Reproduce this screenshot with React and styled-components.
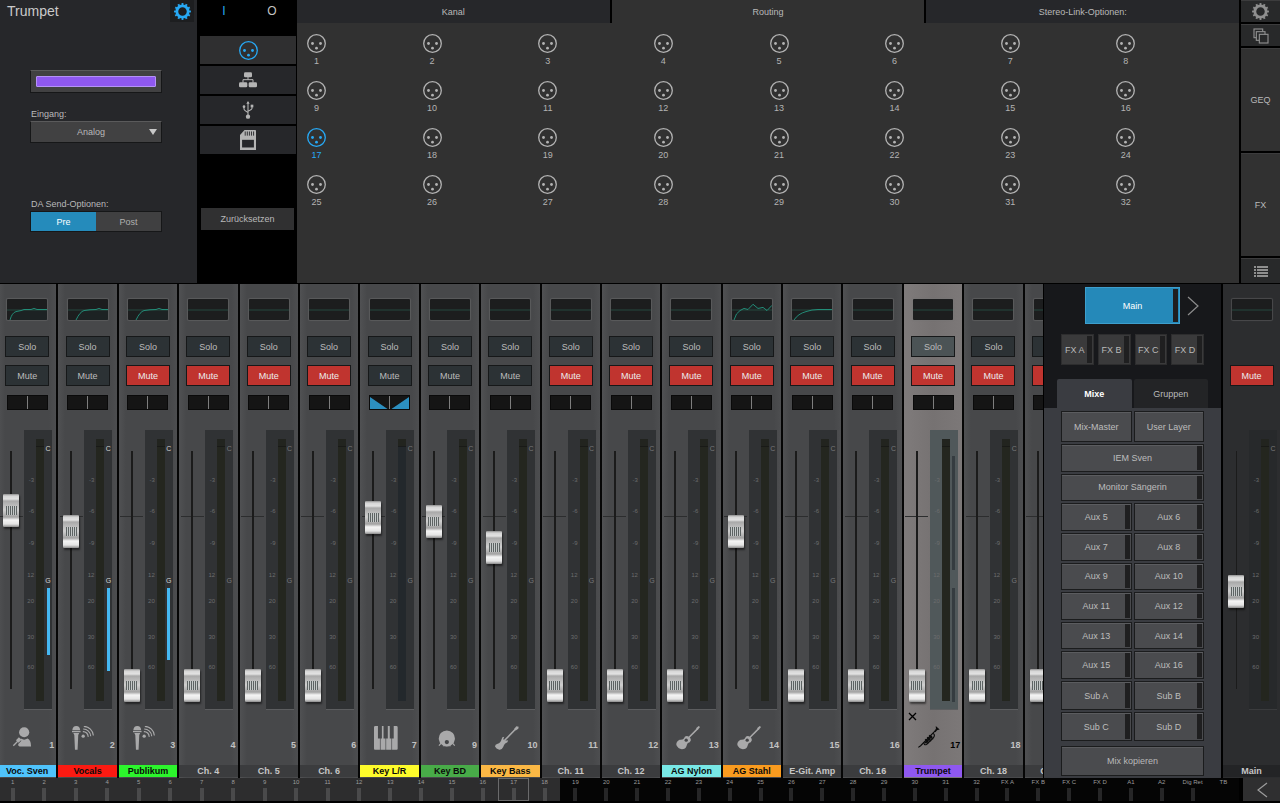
import { useState } from "react";
import styled, { createGlobalStyle, css } from "styled-components";

const channels = [
  { name: "Voc. Sven", no: 1, color: "#4fc3fb", icon: "singer", level: 75, eq: "low", gain: 67 },
  { name: "Vocals", no: 2, color: "#fb1a12", icon: "mic", level: 66, eq: "mid", gain: 83 },
  { name: "Publikum", no: 3, color: "#2cf52c", icon: "mic", mute: true, eq: "mid", gain: 72 },
  { name: "Ch. 4", no: 4, mute: true },
  { name: "Ch. 5", no: 5, mute: true },
  { name: "Ch. 6", no: 6, mute: true },
  { name: "Key L/R", no: 7, color: "#fdfb2b", icon: "keys", level: 72, stereo: true },
  { name: "Key BD", no: 9, color: "#48ab48", icon: "kick", level: 70 },
  { name: "Key Bass", no: 10, color: "#fbb845", icon: "guitar", level: 59 },
  { name: "Ch. 11", no: 11, mute: true },
  { name: "Ch. 12", no: 12, mute: true },
  { name: "AG Nylon", no: 13, color: "#78e8e6", icon: "acoustic", mute: true },
  { name: "AG Stahl", no: 14, color: "#f99b1f", icon: "acoustic", mute: true, level: 66, eq: "bumps" },
  { name: "E-Git. Amp", no: 15, mute: true, eq: "slope" },
  { name: "Ch. 16", no: 16, mute: true },
  { name: "Trumpet", no: 17, color: "#8f58f0", icon: "trumpet", mute: true, selected: true },
  { name: "Ch. 18", no: 18, mute: true },
  { name: "Ch. 19", no: 19, mute: true },
];

const mixes = [
  { name: "Mix-Master", plain: true },
  { name: "User Layer", plain: true },
  { name: "IEM Sven", wide: true },
  { name: "Monitor Sängerin", wide: true },
  ...[5, 6, 7, 8, 9, 10, 11, 12, 13, 14, 15, 16].map((n) => ({ name: `Aux ${n}` })),
  { name: "Sub A" },
  { name: "Sub B" },
  { name: "Sub C" },
  { name: "Sub D" },
];

const inputs = Array.from({ length: 32 }, (_, i) => i + 1);
const overview = [...inputs.map(String), "FX A", "FX B", "FX C", "FX D", "A1", "A2", "Dig Ret", "TB"];
const scale = ["-3", "-6", "-9", "12", "20", "30", "60"];

const curves = {
  low: "M3 20Q5 13 9 12Q15 11 17 10H24L27 9L30 10H40",
  mid: "M8 20Q12 12 16 11Q22 10 28 10L31 9L34 10H40",
  bumps: "M2 20Q4 13 8 11L12 9L16 10L21 5L26 9L31 8L35 11L40 6",
  slope: "M2 20Q6 14 14 12Q20 10 26 10H40",
};

/* ---------- icons ---------- */

const Xlr = () => (
  <svg width="19" height="19" viewBox="0 0 19 19" fill="currentColor">
    <circle cx="9.5" cy="9.5" r="8.8" fill="none" stroke="currentColor" strokeWidth="1.3" />
    <circle cx="5.5" cy="9.5" r="1.4" />
    <circle cx="13.5" cy="9.5" r="1.4" />
    <circle cx="9.5" cy="14.2" r="1.4" />
  </svg>
);

const Gear = () => (
  <svg width="17" height="17" viewBox="0 0 24 24" fill="none" stroke="currentColor">
    <circle cx="12" cy="12" r="8" strokeWidth="4" />
    <circle cx="12" cy="12" r="10.4" strokeWidth="3" pathLength="24" strokeDasharray="1 1" strokeDashoffset="0.5" />
  </svg>
);

const Network = () => (
  <svg width="18" height="16" viewBox="0 0 54 46" fill="currentColor">
    <rect x="15" y="0" width="24" height="15" rx="4" />
    <rect x="0" y="30" width="25" height="15" rx="4" />
    <rect x="29" y="30" width="25" height="15" rx="4" />
    <path d="M27 14V22M12 31V22H42V31" fill="none" stroke="currentColor" strokeWidth="3" />
  </svg>
);

const Usb = () => (
  <svg width="12" height="18" viewBox="0 0 36 54" fill="currentColor">
    <path d="M18 4V46M6 17V24Q6 27 18 35M30 16V22Q30 26 18 31" fill="none" stroke="currentColor" strokeWidth="3.2" />
    <path d="M18 0L23 8H13Z" />
    <circle cx="18" cy="47" r="6.5" />
    <circle cx="6" cy="17" r="4" />
    <rect x="26" y="11" width="8" height="8" />
  </svg>
);

const SdCard = () => (
  <svg width="16" height="20" viewBox="0 0 46 57">
    <path d="M13 0H44Q46 0 46 2V57H0V14Z" fill="currentColor" />
    <path d="M15 4V16M21 4V16M27 4V16M33 4V16M39 4V16" stroke="#26272a" strokeWidth="2.6" />
    <rect x="6" y="28" width="34" height="22" fill="#26272a" />
  </svg>
);

const Copies = () => (
  <svg width="16" height="16" viewBox="0 0 48 48" fill="#28292a" stroke="currentColor" strokeWidth="3.4">
    <rect x="3" y="3" width="26" height="26" />
    <rect x="10" y="11" width="26" height="26" />
    <rect x="19" y="19" width="26" height="26" />
  </svg>
);

const List = () => (
  <svg width="14" height="11" viewBox="0 0 14 11" fill="currentColor">
    <path d="M0 0H2V2H0ZM3 0H14V2H3ZM0 3H2V5H0ZM3 3H14V5H3ZM0 6H2V8H0ZM3 6H14V8H3ZM0 9H2V11H0ZM3 9H14V11H3Z" />
  </svg>
);

const Chevron = ({ left }) => (
  <svg width="12" height="20" viewBox="0 0 12 20" fill="none" stroke="currentColor" strokeWidth="1.2">
    <path d={left ? "M11 3L2 10L11 17" : "M1 1L11 10L1 19"} />
  </svg>
);

const Cross = () => (
  <svg width="9" height="9" viewBox="0 0 9 9" stroke="currentColor" strokeWidth="1.3">
    <path d="M1 1L8 8M8 1L1 8" />
  </svg>
);

const drawings = {
  singer: (
    <>
      <circle cx="37" cy="19" r="15.500" />
      <path d="M27 38Q37 45 47 38Q58 42 58 62H23Q17 60 19 55L28 46Z" />
      <path d="M4 60L22 42" stroke="currentColor" strokeWidth="4" />
      <path d="M12 43L21 34L29 42L20 51Z" />
    </>
  ),
  mic: (
    <>
      <path d="M1 13Q2 0 13 0Q24 0 25 13Z" />
      <path d="M0 15H26V19H0Z" />
      <path d="M4 21H22L19 27L17 72H9L7 27Z" />
      <circle cx="34" cy="31" r="5" />
      <path d="M33 17A15 15 0 0 1 49 33M34 9A23 23 0 0 1 57 31M36 1A30 30 0 0 1 65 29" fill="none" stroke="currentColor" strokeWidth="3.500" />
    </>
  ),
  keys: (
    <path d="M4 0H12V38H18V72H3Q0 72 0 69V4Q0 0 4 0ZM24 0H29V38H35V72H20V38H24ZM42 0H48V38H53V72H37V38H42ZM60 0H68Q72 0 72 4V69Q72 72 69 72H55V38H60Z" />
  ),
  kick: (
    <>
      <path d="M22 58A24.500 24.500 0 1 1 50 58Q36 66 22 58Z" />
      <circle cx="36" cy="49" r="6.500" fill="#434446" />
      <path d="M12 60L19 52M60 60L53 52M24 60H48" stroke="currentColor" strokeWidth="3.500" />
    </>
  ),
  guitar: (
    <>
      <path d="M28 45L62 10" stroke="currentColor" strokeWidth="5" />
      <path d="M58 9L65 1L72 2L71 8L63 14Z" />
      <path d="M20 40Q21 33 28 33L25 40Q31 47 40 43Q40 50 31 53Q27 56 25 64Q21 73 13 72Q3 69 0 62Q0 56 8 54Q17 52 20 40Z" />
    </>
  ),
  acoustic: (
    <>
      <path d="M36 38L66 8" stroke="currentColor" strokeWidth="4.500" />
      <path d="M61 7L69 0L73 3L66 12Z" />
      <path d="M24 38Q27 29 36 31Q46 35 45 44Q43 50 36 52Q33 56 32 61Q29 71 18 71Q6 69 1 58Q0 47 11 42Q20 43 24 38Z" />
      <circle cx="31" cy="43" r="5" fill="#434446" />
    </>
  ),
  trumpet: (
    <>
      <path d="M1 65L8 60L56 11" fill="none" stroke="currentColor" strokeWidth="3.500" />
      <path d="M50 16Q57 9 54 0L66 11Q56 12 53 19Z" />
      <path d="M18 50Q18 60 26 56L48 34Q53 26 45 22" fill="none" stroke="currentColor" strokeWidth="3.500" />
      <path d="M22 40L33 52M28 34L40 46M34 28L46 40" stroke="currentColor" strokeWidth="4.500" />
      <path d="M22 52L42 30" stroke="currentColor" strokeWidth="6" />
    </>
  ),
};

const Instrument = ({ name }) => (
  <svg width="24" height="24" viewBox="0 0 73 73" fill="currentColor">
    {drawings[name]}
  </svg>
);

/* ---------- top area ---------- */

const ChannelSettings = () => {
  const [send, setSend] = useState("Pre");
  return (
    <SettingsPanel>
      <SettingsHeader>
        <Title>Trumpet</Title>
        <GearButton aria-label="Einstellungen"><Gear /></GearButton>
      </SettingsHeader>
      <SettingsBody>
        <ColorButton aria-label="Kanalfarbe"><Swatch /></ColorButton>
        <FieldLabel htmlFor="source" $gap={16}>Eingang:</FieldLabel>
        <SelectBox>
          <Select id="source" defaultValue="Analog">
            <option>Analog</option>
            <option>USB</option>
          </Select>
          <SelectArrow viewBox="0 0 8 6"><path d="M0 0H8L4 6Z" /></SelectArrow>
        </SelectBox>
        <FieldLabel as="span" id="send" $gap={56}>DA Send-Optionen:</FieldLabel>
        <Segments role="group" aria-labelledby="send">
          {["Pre", "Post"].map((s) => (
            <Segment key={s} $on={send === s} onClick={() => setSend(s)}>{s}</Segment>
          ))}
        </Segments>
      </SettingsBody>
    </SettingsPanel>
  );
};

const SourceColumn = () => (
  <Sources>
    <InOut>
      <InOutButton $on>I</InOutButton>
      <InOutButton>O</InOutButton>
    </InOut>
    <SourceList>
      <SourceButton $on aria-label="Analog"><Xlr /></SourceButton>
      <SourceButton aria-label="Netzwerk"><Network /></SourceButton>
      <SourceButton aria-label="USB"><Usb /></SourceButton>
      <SourceButton aria-label="SD-Karte"><SdCard /></SourceButton>
    </SourceList>
    <ResetButton>Zurücksetzen</ResetButton>
  </Sources>
);

const RoutingPanel = () => {
  const [active, setActive] = useState(17);
  return (
    <Routing>
      <Tabs>
        <Tab>Kanal</Tab>
        <Tab $on>Routing</Tab>
        <Tab>Stereo-Link-Optionen:</Tab>
      </Tabs>
      <InputGrid>
        {inputs.map((n) => (
          <InputButton key={n} $on={n === active} onClick={() => setActive(n)}>
            <Xlr />
            {n}
          </InputButton>
        ))}
      </InputGrid>
    </Routing>
  );
};

const SideRail = () => (
  <Rail>
    <RailButton aria-label="Setup"><Gear /></RailButton>
    <RailButton aria-label="Ebenen"><Copies /></RailButton>
    <RailButton $big>GEQ</RailButton>
    <RailButton $big>FX</RailButton>
    <RailButton aria-label="Liste"><List /></RailButton>
  </Rail>
);

/* ---------- mixer ---------- */

const EqThumb = ({ curve }) => (
  <EqBox>
    <svg width="100%" height="100%" viewBox="0 0 40 20" preserveAspectRatio="none" fill="none">
      {curve && <path d={`${curves[curve]}V20Z`} fill="#1c2827" opacity="0.5" />}
      <path d="M0 10.500H40" stroke="#24483f" strokeWidth="1" />
      {curve && <path d={curves[curve]} stroke="#24957f" strokeWidth="0.9" />}
    </svg>
  </EqBox>
);

const FaderBlock = ({ name, level = 0, gain, selected, stereo, main }) => (
  <FaderArea>
    <FaderColumn $main={main}>
      <Fader type="range" min="0" max="100" defaultValue={level} aria-label={`Pegel ${name}`} />
    </FaderColumn>
    <Meter $selected={selected} $main={main}>
      <Scale>
        {scale.map((s) => <span key={s}>{s}</span>)}
      </Scale>
      <MeterBar $stereo={stereo} />
      {selected ? (
        <Dynamics>
          <DynSlot><Reduction /></DynSlot>
          <DynSlot><Reduction /></DynSlot>
        </Dynamics>
      ) : (
        <Dynamics>
          <DynSlot $lit={gain}>C</DynSlot>
          <DynSlot $lit={gain}>
            {!main && "G"}
            {gain && <Gain style={{ height: gain }} />}
          </DynSlot>
        </Dynamics>
      )}
    </Meter>
  </FaderArea>
);

const Channel = ({ ch }) => {
  const [mute, setMute] = useState(!!ch.mute);
  return (
    <Strip $selected={ch.selected}>
      <EqThumb curve={ch.eq} />
      <StripButton $gap={15} $selected={ch.selected}>Solo</StripButton>
      <StripButton $gap={8} $red={mute} onClick={() => setMute(!mute)}>Mute</StripButton>
      <Pan>
        <svg width="100%" height="100%" viewBox="0 0 40 14" preserveAspectRatio="none">
          {ch.stereo && <path d="M0 1V14H18ZM40 1V14H22Z" fill="#2c8fc0" />}
          <path d="M20 0V14" stroke="#a0a0a0" strokeWidth="0.8" />
        </svg>
      </Pan>
      <FaderBlock name={ch.name} level={ch.level} gain={ch.gain} selected={ch.selected} stereo={ch.stereo} />
      <CloseRow>
        {ch.selected && <CloseButton aria-label="Auswahl aufheben"><Cross /></CloseButton>}
      </CloseRow>
      <StripInfo $selected={ch.selected}>
        {ch.icon ? <Instrument name={ch.icon} /> : <span />}
        <StripNumber $selected={ch.selected}>{ch.no}</StripNumber>
      </StripInfo>
      <StripName $color={ch.color}>{ch.name}</StripName>
    </Strip>
  );
};

const MixSelector = () => (
  <MixPanel>
    <MixTop>
      <MainRow>
        <MainButton>
          <MixLabel>Main</MixLabel>
          <Lamp />
        </MainButton>
        <NextButton aria-label="Weiter"><Chevron /></NextButton>
      </MainRow>
      <FxRow>
        {["FX A", "FX B", "FX C", "FX D"].map((fx) => (
          <FxButton key={fx}>
            <MixLabel $small>{fx}</MixLabel>
            <Lamp />
          </FxButton>
        ))}
      </FxRow>
      <MixTabs>
        <MixTab $on>Mixe</MixTab>
        <MixTab>Gruppen</MixTab>
      </MixTabs>
    </MixTop>
    <MixBottom>
      <MixGrid>
        {mixes.map((m) => (
          <MixButton key={m.name} $wide={m.wide}>
            <MixLabel $plain={m.plain}>{m.name}</MixLabel>
            {!m.plain && <Lamp />}
          </MixButton>
        ))}
      </MixGrid>
      <CopyButton>Mix kopieren</CopyButton>
    </MixBottom>
  </MixPanel>
);

const MainChannel = () => (
  <MainStrip>
    <EqThumb />
    <StripButton $gap={44} $red>Mute</StripButton>
    <MainSpacer />
    <FaderBlock name="Main" level={40} main />
    <MainFoot />
    <StripName $main>Main</StripName>
  </MainStrip>
);

const App = () => (
  <>
    <GlobalStyle />
    <Page>
      <Top>
        <ChannelSettings />
        <SourceColumn />
        <RoutingPanel />
        <SideRail />
      </Top>
      <Mixer>
        <StripViewport>
          <Strips>
            {channels.map((ch) => <Channel key={ch.no} ch={ch} />)}
          </Strips>
        </StripViewport>
        <MixSelector />
        <MainChannel />
      </Mixer>
      <Footer>
        <Overview>
          {overview.map((label, i) => (
            <OverviewItem key={label} $lit={i < 18} $wide={i < 12} $current={label === "17"}>
              {label}
              {label !== "TB" && <Tick $lit={i < 18} />}
            </OverviewItem>
          ))}
        </Overview>
        <BackButton aria-label="Zurück"><Chevron left /></BackButton>
      </Footer>
    </Page>
  </>
);

export default App;

const GlobalStyle = createGlobalStyle`
  * { box-sizing: border-box; }

  body {
    margin: 0;
    background: #000;
    color: #b9b9b9;
    font-family: "Liberation Sans", Arial, sans-serif;
    font-size: 9px;
    line-height: 10px;
  }

  button, select {
    margin: 0;
    padding: 0;
    border: 0;
    border-radius: 0;
    color: inherit;
    font: inherit;
  }

  svg { display: block; flex-shrink: 0; }
`;

const center = css`
  display: flex;
  align-items: center;
  justify-content: center;
`;

const Page = styled.div`
  display: flex;
  flex-direction: column;
  height: 100vh;
  min-height: 720px;
`;

const Top = styled.div`
  display: flex;
  flex-shrink: 0;
  border-bottom: 1px solid #000;
`;

const SettingsPanel = styled.section`
  width: 197px;
  background: #26272a;
`;

const SettingsHeader = styled.header`
  display: flex;
  justify-content: space-between;
  height: 22px;
  padding: 0 3px 0 7px;
`;

const Title = styled.h1`
  margin: 0;
  font-size: 14px;
  font-weight: 400;
  line-height: 22px;
  color: #cacaca;
`;

const GearButton = styled.button`
  ${center}
  width: 24px;
  background: #1d1e20;
  color: #27a9f5;
`;

const SettingsBody = styled.div`
  display: flex;
  flex-direction: column;
  padding: 48px 35px 0 30px;
`;

const ColorButton = styled.button`
  display: flex;
  height: 23px;
  padding: 5px;
  background: #414142;
  border: 1px solid #161718;
  border-top-color: #5a5a5b;
`;

const Swatch = styled.span`
  flex: 1;
  background: #8f58f0;
  border: 1px solid #b592f7;
  border-radius: 1px;
`;

const FieldLabel = styled.label`
  margin-top: ${(p) => p.$gap}px;
  padding-left: 1px;
`;

const SelectBox = styled.div`
  position: relative;
  margin-top: 2px;
`;

const Select = styled.select`
  display: block;
  appearance: none;
  width: 100%;
  height: 22px;
  padding-right: 10px;
  background: #414142;
  border: 1px solid #161718;
  border-top-color: #5a5a5b;
  text-align-last: center;
`;

const SelectArrow = styled.svg`
  position: absolute;
  top: 8px;
  right: 5px;
  width: 8px;
  height: 6px;
  fill: #c8c8c8;
  pointer-events: none;
`;

const Segments = styled.div`
  display: grid;
  grid-template-columns: 1fr 1fr;
  margin-top: 2px;
  border: 1px solid #161718;
`;

const Segment = styled.button`
  height: 19px;
  background: ${(p) => (p.$on ? "#258bbb" : "#404041")};
  color: ${(p) => (p.$on ? "#fff" : "#b0b0b0")};
`;

const Sources = styled.section`
  display: flex;
  flex-direction: column;
  width: 100px;
  padding: 0 1px 0 3px;
  background: #000;
`;

const InOut = styled.div`
  display: grid;
  grid-template-columns: 1fr 1fr;
  height: 22px;
`;

const InOutButton = styled.button`
  background: none;
  font-size: 12px;
  color: ${(p) => (p.$on ? "#27a9f5" : "#c4c4c4")};
`;

const SourceList = styled.div`
  display: flex;
  flex-direction: column;
  gap: 2px;
  margin-top: 14px;
`;

const SourceButton = styled.button`
  ${center}
  height: 28px;
  background: ${(p) => (p.$on ? "#2f2f30" : "#26272a")};
  color: ${(p) => (p.$on ? "#27a9f5" : "#b4b4b4")};
`;

const ResetButton = styled.button`
  height: 22px;
  margin: 54px 2px 0 1px;
  background: #303031;
`;

const Routing = styled.section`
  flex: 1;
  min-width: 0;
  background: #313131;
`;

const Tabs = styled.nav`
  display: grid;
  grid-template-columns: repeat(3, 1fr);
  gap: 2px;
  background: #000;
`;

const Tab = styled.button`
  height: 23px;
  background: ${(p) => (p.$on ? "#313131" : "#26272a")};
`;

const InputGrid = styled.div`
  display: grid;
  grid-template-columns: repeat(8, 1fr);
  row-gap: 14px;
  padding: 11px 7px 0 10px;
`;

const InputButton = styled.button`
  display: flex;
  flex-direction: column;
  align-items: center;
  gap: 3px;
  width: 19px;
  height: 33px;
  background: none;
  line-height: 11px;
  color: ${(p) => (p.$on ? "#27a9f5" : "#b3b3b3")};
`;

const Rail = styled.aside`
  display: flex;
  flex-direction: column;
  gap: 2px;
  width: 41px;
  padding-left: 2px;
  background: #000;
`;

const RailButton = styled.button`
  ${center}
  height: ${(p) => (p.$big ? 103 : 22)}px;
  background: ${(p) => (p.$big ? "#313131" : "#28292a")};
  border-top: 1px solid #3c3c3d;
  color: ${(p) => (p.$big ? "#b9b9b9" : "#8f8f8f")};

  &:last-child {
    height: 25px;
  }
`;

const Mixer = styled.main`
  display: flex;
  flex: 1;
  min-height: 0;
`;

const StripViewport = styled.div`
  display: flex;
  flex: 1;
  min-width: 0;
  overflow: hidden;
`;

const Strips = styled.div`
  display: grid;
  flex-shrink: 0;
  grid-template-columns: repeat(18, minmax(0, 1fr));
  grid-template-rows: minmax(0, 1fr);
  width: calc(100% + 44px);
  margin-left: -2px;
`;

const Strip = styled.section`
  display: flex;
  flex-direction: column;
  align-items: center;
  min-height: 0;
  padding-top: 15px;
  border-right: 2px solid #060606;
  background: ${(p) =>
    p.$selected
      ? "linear-gradient(90deg, #7f7b7b, #767272 50%, #7c7878)"
      : "linear-gradient(90deg, #505153, #47484a 12%, #47484a 88%, #4d4e50)"};
`;

const EqBox = styled.div`
  flex-shrink: 0;
  width: 40px;
  height: 21px;
  margin-bottom: 1px;
  background: #1c1d1e;
  border-radius: 1px;
  box-shadow: 0 0 1px 1px rgba(120, 120, 120, 0.4);
`;

const StripButton = styled.button`
  flex-shrink: 0;
  width: 44px;
  height: 21px;
  margin-top: ${(p) => p.$gap}px;
  background: ${(p) => (p.$red ? "#c0342f" : p.$selected ? "#4b5355" : "#2c3235")};
  border: 1px solid #161819;
  color: ${(p) => (p.$red ? "#ececec" : "#bcbcbc")};
`;

const Pan = styled.div`
  flex-shrink: 0;
  width: 41px;
  height: 15px;
  margin-top: 9px;
  background: #151515;
  border: 1px solid #0a0a0a;
`;

const FaderArea = styled.div`
  display: flex;
  flex: 1 1 0;
  align-self: stretch;
  min-height: 0;
  margin-top: 20px;
`;

const FaderColumn = styled.div`
  display: flex;
  justify-content: center;
  width: 26px;
  min-height: 0;
  padding: 5px 0 8px;
  background:
    linear-gradient(#1b1b1b, #1b1b1b) center / ${(p) => (p.$main ? 1 : 2)}px 85% no-repeat,
    linear-gradient(#2c2d2e, #2c2d2e) 50% 31% / 23px 1px no-repeat;
`;

const Fader = styled.input`
  appearance: none;
  writing-mode: vertical-lr;
  direction: rtl;
  width: 16px;
  height: auto;
  min-height: 0;
  margin: 0;
  background: none;

  &::-webkit-slider-thumb {
    appearance: none;
    width: 16px;
    height: 33px;
    border-radius: 1px;
    background:
      repeating-linear-gradient(90deg, #5d6363 0 1px, #c4c8c8 1px 2px) center / 11px 9px no-repeat,
      linear-gradient(#8e8e8e, #d6d6d6 2px, #e2e2e2 5px, #a9a9a9 7px, #cfcfcf 16px, #a2a2a2 23px, #f4f4f4 26px, #e4e4e4 30px, #8b8b8b);
    box-shadow: 1px 2px 2px rgba(0, 0, 0, 0.5);
  }
`;

const Meter = styled.div`
  display: grid;
  grid-template-columns: 12px 8px 8px;
  grid-template-rows: minmax(0, 1fr);
  width: 28px;
  background: ${(p) => (p.$selected ? "#50585a" : p.$main ? "#27292b" : "#303234")};
  border-bottom: 1px solid ${(p) => (p.$main ? "#3a3b3d" : "#5c5d5f")};
`;

const Scale = styled.div`
  display: grid;
  grid-template-rows: 31fr 32fr 32fr 27fr 36fr 30fr 46fr;
  justify-items: end;
  padding: 46px 2px 0 0;
  color: #6c6d6e;
  font-size: 6px;
  line-height: 8px;
`;

const MeterBar = styled.div`
  margin: 9px 0 8px;
  background: ${(p) =>
    p.$stereo
      ? "linear-gradient(#22241f 7px, #191b1c 7px 8px, #23282c 8px)"
      : "linear-gradient(#22241f 7px, #191a17 7px 8px, #24261f 8px)"};
`;

const Dynamics = styled.div`
  display: grid;
  grid-template-rows: 132fr 133fr;
  padding-top: 15px;
`;

const DynSlot = styled.div`
  display: flex;
  flex-direction: column;
  align-items: center;
  color: ${(p) => (p.$lit ? "#d2d2d2" : "#77787a")};
  font-size: 7px;
  line-height: 8px;
`;

const Gain = styled.div`
  width: 3px;
  margin-top: 3px;
  background: #45b9f2;
`;

const Reduction = styled.div`
  flex: 1;
  width: 3px;
  margin: 11px 0 7px;
  background: #353c40;
`;

const CloseRow = styled.div`
  flex-shrink: 0;
  align-self: stretch;
  height: 12px;
  padding: 2px 0 0 4px;
`;

const CloseButton = styled.button`
  display: block;
  background: none;
  color: #000;
`;

const StripInfo = styled.div`
  display: flex;
  flex-shrink: 0;
  align-self: stretch;
  justify-content: space-between;
  align-items: flex-end;
  height: 24px;
  margin: 4px 2px 15px 14px;
  color: ${(p) => (p.$selected ? "#0c0c0c" : "#a9a9aa")};
`;

const StripNumber = styled.span`
  color: ${(p) => (p.$selected ? "#000" : "#c2c2c2")};
  font-weight: 700;
`;

const StripName = styled.div`
  flex-shrink: 0;
  align-self: stretch;
  height: 12px;
  margin-bottom: 1px;
  background: ${(p) => p.$color || (p.$main ? "#232426" : "#3b3c3e")};
  color: ${(p) => (p.$color ? "#0a0a0a" : "#c6c6c6")};
  font-weight: 700;
  line-height: 12px;
  text-align: center;
  white-space: nowrap;
`;

const MixPanel = styled.aside`
  display: flex;
  flex-direction: column;
  width: 180px;
  border-left: 1px solid #000;
  border-right: 2px solid #000;
`;

const MixTop = styled.div`
  padding: 3px 17px 0;
  background: #17181b;
`;

const MainRow = styled.div`
  display: flex;
  align-items: center;
  gap: 7px;
  padding-left: 24px;
`;

const lampButton = css`
  display: flex;
  align-items: center;
  padding: 1px;
  border: 1px solid #1b1c1d;
`;

const MainButton = styled.button`
  ${lampButton}
  width: 95px;
  height: 37px;
  background: #2589b9;
  border-color: #3d9fcd;
  color: #fff;
`;

const MixLabel = styled.span`
  flex: 1;
  padding-left: ${(p) => (p.$plain || p.$small ? 0 : 5)}px;
  white-space: nowrap;
`;

const Lamp = styled.i`
  align-self: stretch;
  width: 5px;
  background: #1f1f20;
`;

const NextButton = styled.button`
  background: none;
  color: #8c8c8c;
`;

const FxRow = styled.div`
  display: grid;
  grid-template-columns: repeat(4, 1fr);
  gap: 4px;
  margin-top: 10px;
`;

const FxButton = styled.button`
  ${lampButton}
  height: 31px;
  background: #3a3a3b;
  border-color: #2d2d2e;
`;

const MixTabs = styled.div`
  display: grid;
  grid-template-columns: 1fr 1fr;
  gap: 2px;
  margin: 14px -4px 0;
`;

const MixTab = styled.button`
  height: 29px;
  background: ${(p) => (p.$on ? "#3a3c41" : "#232426")};
  border-radius: 2px 2px 0 0;
  color: ${(p) => (p.$on ? "#fff" : "#b9b9b9")};
  font-weight: ${(p) => (p.$on ? 700 : 400)};
`;

const MixBottom = styled.div`
  display: flex;
  flex: 1;
  flex-direction: column;
  min-height: 0;
  padding: 3px 17px 2px;
  background: #3a3c41;
`;

const MixGrid = styled.div`
  display: grid;
  flex: 1;
  grid-template-columns: 1fr 1fr;
  grid-template-rows: 31px repeat(8, 1fr) 29px 29px;
  gap: 2px;
`;

const MixButton = styled.button`
  ${lampButton}
  grid-column: ${(p) => (p.$wide ? "span 2" : "auto")};
  background: #4a4b4e;
  box-shadow: inset 0 1px #5b5c5f;
  color: #bdbdbd;
`;

const CopyButton = styled.button`
  flex-shrink: 0;
  height: 30px;
  margin-top: 5px;
  background: #4a4b4e;
  border: 1px solid #1b1c1d;
  box-shadow: inset 0 1px #5b5c5f;
`;

const MainStrip = styled.section`
  display: flex;
  flex-direction: column;
  align-items: center;
  width: 57px;
  padding-top: 15px;
  background: #2c2d2f;
`;

const MainSpacer = styled.div`
  flex-shrink: 0;
  height: 24px;
`;

const MainFoot = styled.div`
  flex-shrink: 0;
  height: 55px;
`;

const Footer = styled.footer`
  display: flex;
  flex-shrink: 0;
  height: 25px;
  padding-bottom: 2px;
`;

const Overview = styled.nav`
  display: flex;
  flex: 1;
  min-width: 0;
  margin: 0 4px 0 -3px;
`;

const OverviewItem = styled.div`
  display: flex;
  flex: ${(p) => (p.$wide ? 51 : 50)} 1 0;
  flex-direction: column;
  align-items: center;
  gap: 1px;
  min-width: 0;
  background: ${(p) => (p.$lit ? "#2d2d2e" : "#050505")};
  outline: ${(p) => (p.$current ? "1px solid #6a6a6b" : "none")};
  outline-offset: -1px;
  color: #9c9c9c;
  font-size: 6px;
  line-height: 9px;
  white-space: nowrap;
`;

const Tick = styled.i`
  flex: 1;
  width: 4px;
  background: ${(p) => (p.$lit ? "#4a4a4b" : "#262627")};
`;

const BackButton = styled.button`
  ${center}
  width: 37px;
  background: #2f2f30;
  color: #9c9c9c;
`;
